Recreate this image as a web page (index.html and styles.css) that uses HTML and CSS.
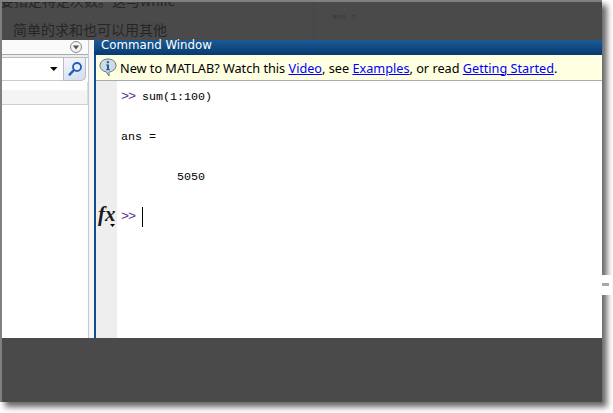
FILE: index.html
```html
<!DOCTYPE html>
<html lang="en">
<head>
<meta charset="utf-8">
<title>Command Window</title>
<link rel="stylesheet" href="styles.css">
</head>
<body>
<div class="frame">
  <div class="dim-top">
    <div class="article">
      <p class="article-line first">要指定特定次数。这与while</p>
      <p class="article-line second">简单的求和也可以用其他</p>
    </div>
    <div class="dim-side"><span class="dim-ans">ans =</span></div>
  </div>
  <div class="desk">
    <aside class="left">
      <div class="left-head">
        <span class="menu-btn"><svg width="12" height="12" viewBox="0 0 12 12"><circle cx="6" cy="6" r="5.500" fill="#f4f4f4" stroke="#8a8a8a"/><path d="M2.800 4.400h6.400L6 8.400z" fill="#555"/></svg></span>
      </div>
      <div class="search-row">
        <div class="combo"><svg class="caret" width="8" height="4" viewBox="0 0 8 4"><path d="M0 0h7.500L3.800 4z" fill="#000"/></svg></div>
        <div class="find"><svg width="16" height="16" viewBox="0 0 16 16"><circle cx="10" cy="6" r="4" fill="#e4eefa" stroke="#1f5fb4" stroke-width="1.800"/><path d="M7 9 2.600 13.600" stroke="#1f5fb4" stroke-width="2.400" stroke-linecap="round"/></svg></div>
      </div>
      <div class="list-head"></div>
    </aside>
    <div class="sash"></div>
    <main class="cmd">
      <div class="title">Command Window</div>
      <div class="notice">
        <svg class="info" width="18" height="19" viewBox="0 0 18 19"><path d="M9 1C4.500 1 1 3.800 1 7.500c0 3.200 2.700 5.800 6.300 6.400L10 18v-4c3.900-.5 7-3.100 7-6.500C17 3.800 13.500 1 9 1z" fill="#cfdbe7" stroke="#66727e"/><rect x="7.800" y="3.200" width="2.200" height="2" fill="#1f5f98"/><path d="M7 6.500h3v4.700h1v1H7v-1h1V7.500H7z" fill="#1f5f98"/></svg>
        <span>New to MATLAB? Watch this <a href="#">Video</a>, see <a href="#">Examples</a>, or read <a href="#">Getting Started</a>.</span>
      </div>
      <div class="console">
        <div class="gutter">
          <span class="fx">fx</span>
          <svg class="fx-caret" width="5" height="3" viewBox="0 0 5 3"><path d="M0 0h5L2.500 3z" fill="#000"/></svg>
        </div>
        <div class="lines">
          <div class="line"><span class="prompt">&gt;&gt;</span> sum(1:100)</div>
          <div class="line"></div>
          <div class="line">ans =</div>
          <div class="line"></div>
          <div class="line">        5050</div>
          <div class="line"></div>
          <div class="line"><span class="prompt">&gt;&gt;</span> <span class="cursor"></span></div>
        </div>
      </div>
    </main>
  </div>
  <div class="dim-bottom"></div>
  <div class="notch"></div>
</div>
</body>
</html>
```

FILE: styles.css
```css
html, body { margin: 0; padding: 0; background: #fff; }
body { width: 613px; height: 413px; overflow: hidden; }

.frame {
  position: relative;
  box-sizing: border-box;
  width: 602px;
  height: 402px;
  border-left: 2px solid #808080;
  border-top: 2px solid #808080;
  display: flex;
  flex-direction: column;
  box-shadow: 5px 5px 6px rgba(0, 0, 0, .6);
}

.dim-top {
  height: 38px;
  flex: none;
  background: #4a4a4a;
  display: flex;
  overflow: hidden;
}
.article { width: 311px; flex: none; color: #262626; font: 14px/20px "Noto Sans CJK SC", sans-serif; }
.article-line { margin: 0; white-space: nowrap; }
.article-line.first { margin-top: -12px; margin-left: -2px; }
.article-line.second { margin-top: 9px; margin-left: 11px; }
.dim-side { flex: 1; border-left: 1px solid #3e4650; padding: 8px 0 0 18px; }
.dim-ans { display: block; color: #383838; font: 8px/14px "Liberation Mono", monospace; }

.desk { flex: 1; display: flex; min-height: 0; background: #fff; }

.left { width: 86px; flex: none; background: #fff; display: flex; flex-direction: column; }
.left-head {
  height: 18px;
  display: flex;
  justify-content: flex-end;
  align-items: flex-start;
  padding: 1px 6px 0 0;
  box-sizing: border-box;
  border-bottom: 1px solid #bdbdbd;
  background: linear-gradient(#fafafa 0 14px, #a9a9a9 14px 15px, #ececec 15px);
}
.menu-btn { display: flex; }
.search-row { height: 23px; display: flex; flex: none; }
.combo {
  flex: 1;
  display: flex;
  justify-content: flex-end;
  align-items: center;
  padding-right: 5px;
  border-bottom: 1px solid #c8ccd4;
}
.caret { display: block; }
.find {
  width: 21px;
  display: flex;
  align-items: center;
  justify-content: center;
  background: linear-gradient(160deg, #f4f6fb, #d3ddef);
  border: 1px solid #b4bcc8;
  border-top: 0;
  border-radius: 0 0 5px 0;
  margin-right: 2px;
}
.list-head {
  height: 22px;
  margin: 1px 0 0;
  background: linear-gradient(#fff 0 8px, #f4f4f4 8px);
  border-bottom: 1px solid #cfcfcf;
  border-right: 1px solid #dcdcdc;
}

.sash { width: 6px; flex: none; background: #f6f6f6; border-left: 1px solid #c8c8c8; box-sizing: border-box; }

.cmd { flex: 1; min-width: 0; display: flex; flex-direction: column; border-left: 2px solid #0f4d8c; }

.title {
  height: 15px;
  margin-left: -2px;
  flex: none;
  padding-left: 7px;
  color: #fff;
  background: linear-gradient(#1c5a94, #063a70);
  font: 11.800px/11px "DejaVu Sans", sans-serif;
}
.notice {
  height: 25px;
  flex: none;
  display: flex;
  align-items: center;
  gap: 3px;
  padding-left: 3px;
  background: #ffffe1;
  border-bottom: 1px solid #ababab;
  color: #000;
  font: 12.700px/16px "Noto Sans", sans-serif;
}
.notice a { color: #0000ff; text-decoration: underline; }
.info { flex: none; }

.console { flex: 1; display: flex; min-height: 0; }
.gutter {
  position: relative;
  width: 21px;
  flex: none;
  background: #eeeeee;
}
.fx {
  position: absolute;
  left: 2px;
  top: 123px;
  font: italic bold 21px/20px "Liberation Serif", serif;
  color: #1a1a1a;
}
.fx-caret { position: absolute; left: 14px; top: 143px; }

.lines { flex: 1; padding: 6px 0 0 4px; color: #000; font: 11.670px/20px "Liberation Mono", monospace; }
.line { height: 20px; white-space: pre; }
.prompt { color: #5a2f8c; font-size: 13.500px; letter-spacing: -1.100px; }
.cursor { display: inline-block; width: 1px; height: 20px; background: #000; vertical-align: top; }

.dim-bottom { height: 64px; flex: none; background: #4a4a4a; }

.notch {
  position: absolute;
  left: 600px;
  top: 273px;
  width: 10px;
  height: 20px;
  background: linear-gradient(#fff 0 8px, #a8a8a8 8px 11px, #fff 11px) left / 7px 100% no-repeat #fff;
}
```
